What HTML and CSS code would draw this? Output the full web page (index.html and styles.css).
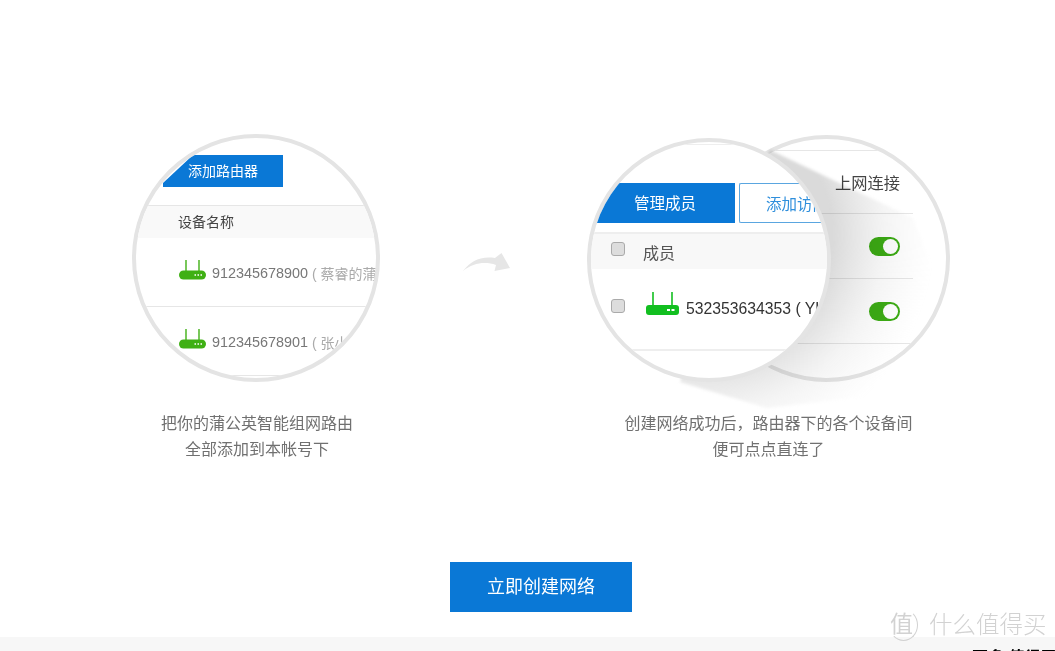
FILE: index.html
```html
<!DOCTYPE html>
<html lang="zh-CN">
<head>
    <meta charset="UTF-8">
    <meta name="viewport" content="width=device-width, initial-scale=1.0">
    <title>创建网络</title>
    <link rel="stylesheet" href="styles.css">
</head>
<body>
    <div class="page">
        <div class="steps">
            <div class="step step-one">
                <div class="lens lens-left">
                    <div class="add-tab">添加路由器</div>
                    <div class="device-head">设备名称</div>
                    <div class="device-row">
                        <svg class="router" viewBox="0 0 27 20"><path d="M7 0v13M20 0v13" stroke="#3fb014" stroke-width="1.4"/><rect y="10.500" width="27" height="9" rx="4.500" fill="#3fb014"/><path d="M15.500 15h1.500M18.500 15h1.500M21.500 15h1.500" stroke="#fff" stroke-width="1.600"/></svg>
                        <span class="sn">912345678900</span><span class="owner">&nbsp;( 蔡睿的蒲公英 )</span>
                    </div>
                    <div class="device-row">
                        <svg class="router" viewBox="0 0 27 20"><path d="M7 0v13M20 0v13" stroke="#3fb014" stroke-width="1.4"/><rect y="10.500" width="27" height="9" rx="4.500" fill="#3fb014"/><path d="M15.500 15h1.500M18.500 15h1.500M21.500 15h1.500" stroke="#fff" stroke-width="1.600"/></svg>
                        <span class="sn">912345678901</span><span class="owner owner-cut">&nbsp;( 张小</span>
                    </div>
                </div>
                <p class="caption">把你的蒲公英智能组网路由<br>全部添加到本帐号下</p>
            </div>

            <svg class="next-arrow" viewBox="0 0 48 20"><path d="M0 18C8 8 17 3 32 5L38.500 0 47 15 31.500 18 33 12C22 8 10 10 0 18Z" fill="#e6e6e6"/></svg>

            <div class="step step-two">
                <div class="lens-stage">
                    <div class="lens lens-back">
                        <div class="link-row link-title">上网连接</div>
                        <div class="link-row"><span class="toggle"></span></div>
                        <div class="link-row link-last"><span class="toggle"></span></div>
                    </div>
                    <svg class="lens-shadow" viewBox="0 0 363 290">
                        <defs>
                            <radialGradient id="castShadow" gradientUnits="userSpaceOnUse" cx="122" cy="100" r="225">
                                <stop offset="0.55" stop-color="#bbb" stop-opacity="0.55"/>
                                <stop offset="0.78" stop-color="#c8c8c8" stop-opacity="0.2"/>
                                <stop offset="1" stop-color="#d8d8d8" stop-opacity="0"/>
                            </radialGradient>
                        </defs>
                        <path d="M183 16L326 84 363 180 300 260 180 274 93 248Z" fill="url(#castShadow)"/>
                    </svg>
                    <div class="lens lens-front">
                        <div class="member-tabs">
                            <div class="member-tab">管理成员</div>
                            <div class="guest-tab">添加访问</div>
                        </div>
                        <div class="member-head"><span class="check"></span>成员</div>
                        <div class="member-row">
                            <span class="check"></span>
                            <svg class="router-big" viewBox="0 0 33 23"><path d="M7 0v14M26 0v14" stroke="#12bf20" stroke-width="1.600"/><rect y="13" width="33" height="10" rx="3" fill="#12bf20"/><path d="M21 18h3M25.500 18h3" stroke="#fff" stroke-width="2"/></svg>
                            <span class="member-sn">532353634353 ( YUN</span>
                        </div>
                    </div>
                </div>
                <p class="caption">创建网络成功后，路由器下的各个设备间<br>便可点点直连了</p>
            </div>
        </div>

        <a class="create-btn">立即创建网络</a>

        <div class="footer">
            <span class="footer-text">更多 值得买</span>
        </div>

        <div class="watermark">
            <span class="mark-logo">值</span>
            <span class="mark-name">什么值得买</span>
        </div>
    </div>
</body>
</html>
```

FILE: styles.css
```css
* {
    box-sizing: border-box;
}
body {
    margin: 0;
    background-color: #fff;
    font-family: "Liberation Sans", "Noto Sans CJK SC", sans-serif;
}
.page {
    position: relative;
    width: 1055px;
    height: 651px;
    overflow: hidden;
}
.steps {
    display: flex;
    align-items: flex-start;
    padding: 134px 0 0 132px;
}
.step-one {
    width: 250px;
}
.step-two {
    width: 363px;
}
.caption {
    margin: 29px 0 0;
    text-align: center;
    font-size: 16px;
    line-height: 26px;
    color: #707070;
}
.next-arrow {
    width: 48px;
    height: 20px;
    margin: 119px 76px 0 81px;
}

/* circles */
.lens {
    width: 248px;
    height: 248px;
    border: 4px solid #e4e4e4;
    border-radius: 50%;
    background: #fff;
    overflow: hidden;
}
.lens-stage {
    position: relative;
    height: 248px;
}
.lens-back {
    position: absolute;
    left: 116px;
    top: 1px;
    width: 247px;
    height: 247px;
    padding-top: 11px;
}
.lens-shadow {
    position: absolute;
    left: 0;
    top: 0;
    width: 363px;
    height: 290px;
    mix-blend-mode: multiply;
    filter: blur(1.500px);
}
.lens-front {
    position: absolute;
    left: 0;
    top: 4px;
    width: 244px;
    height: 244px;
    padding-top: 2px;
}

/* left circle */
.add-tab {
    width: 120px;
    height: 32px;
    margin: 17px 0 0 27px;
    padding-left: 25px;
    background: #0a78d6;
    color: #fff;
    font-size: 14px;
    line-height: 32px;
    clip-path: polygon(30px 0, 100% 0, 100% 100%, 0 100%, 0 28px);
}
.device-head {
    height: 33px;
    margin-top: 18px;
    padding-left: 42px;
    border-top: 1px solid #e6e6e6;
    background: #f9f9f9;
    color: #444;
    font-size: 14px;
    line-height: 33px;
}
.device-row {
    display: flex;
    align-items: center;
    height: 69px;
    padding-left: 43px;
    border-bottom: 1px solid #e6e6e6;
    font-size: 14.400px;
    white-space: nowrap;
}
.router {
    flex: none;
    width: 27px;
    height: 20px;
    margin: -4px 6px 0 0;
}
.sn {
    margin-top: 2px;
    color: #777;
}
.owner {
    margin-top: 2px;
    color: #aaa;
    font-size: 14px;
}
.owner-cut {
    width: 37px;
    overflow: hidden;
}

/* right circle, front */
.member-tabs {
    display: flex;
    gap: 4px;
    margin-bottom: 9px;
    padding-top: 38px;
    border-top: 1px solid #eee;
}
.member-tabs > div {
    height: 40px;
    font-size: 15.500px;
    line-height: 41px;
    white-space: nowrap;
}
.member-tab {
    flex: none;
    width: 144px;
    padding-left: 43px;
    background: #0a78d6;
    color: #fff;
}
.guest-tab {
    flex: none;
    width: 84px;
    padding-left: 26px;
    border: 1.500px solid #5aa6e0;
    border-right: 0;
    border-radius: 2px 0 0 2px;
    color: #2f8fdc;
    overflow: hidden;
}
.member-head {
    display: flex;
    align-items: center;
    height: 37px;
    padding-left: 20px;
    border-top: 2px solid #eee;
    background: #f8f8f8;
    color: #555;
    font-size: 16px;
}
.member-head .check {
    margin: -5px 18px 0 0;
}
.member-row {
    display: flex;
    align-items: center;
    height: 82px;
    padding-left: 20px;
    border-bottom: 2px solid #eee;
    white-space: nowrap;
}
.check {
    flex: none;
    width: 14px;
    height: 14px;
    margin-top: -7px;
    border: 1px solid #aaa;
    border-radius: 3px;
    background: #ddd;
}
.router-big {
    flex: none;
    width: 33px;
    height: 23px;
    margin: -12px 7px 0 21px;
}
.member-sn {
    width: 134px;
    overflow: hidden;
    color: #333;
    font-size: 15.750px;
}

/* right circle, back */
.link-row {
    display: flex;
    align-items: center;
    justify-content: flex-end;
    height: 65px;
    margin-right: 33px;
    padding-right: 13px;
    border-top: 1px solid #e6e6e6;
}
.link-title {
    height: 63px;
    color: #444;
    font-size: 16.250px;
}
.link-last {
    height: 66px;
    border-bottom: 1px solid #e6e6e6;
}
.toggle {
    position: relative;
    width: 31px;
    height: 19px;
    border-radius: 10px;
    background: #3cac14;
}
.toggle::after {
    content: "";
    position: absolute;
    right: 2px;
    top: 2px;
    width: 15px;
    height: 15px;
    border-radius: 50%;
    background: #fff;
}

/* button and footer */
.create-btn {
    display: block;
    width: 182px;
    height: 50px;
    margin: 99px 0 0 450px;
    background: #0a78d6;
    color: #fff;
    font-size: 18px;
    line-height: 50px;
    text-align: center;
}
.footer {
    height: 14px;
    margin-top: 25px;
    padding: 11px 0 0 972px;
    background: #f7f7f7;
    overflow: hidden;
}
.footer-text {
    display: block;
    color: #000;
    font-size: 16px;
    font-weight: bold;
    line-height: 20px;
    white-space: nowrap;
}
.watermark {
    position: absolute;
    left: 889px;
    top: 609px;
    display: flex;
    align-items: center;
    gap: 11px;
    color: #d2d2d2;
}
.mark-logo {
    width: 29px;
    height: 32px;
    border: 1px solid transparent;
    border-right-color: #d2d2d2;
    border-bottom-color: #d2d2d2;
    border-radius: 50%;
    font-size: 23px;
    line-height: 28px;
}
.mark-name {
    font-size: 23.500px;
    font-weight: 300;
    line-height: 32px;
}
```
